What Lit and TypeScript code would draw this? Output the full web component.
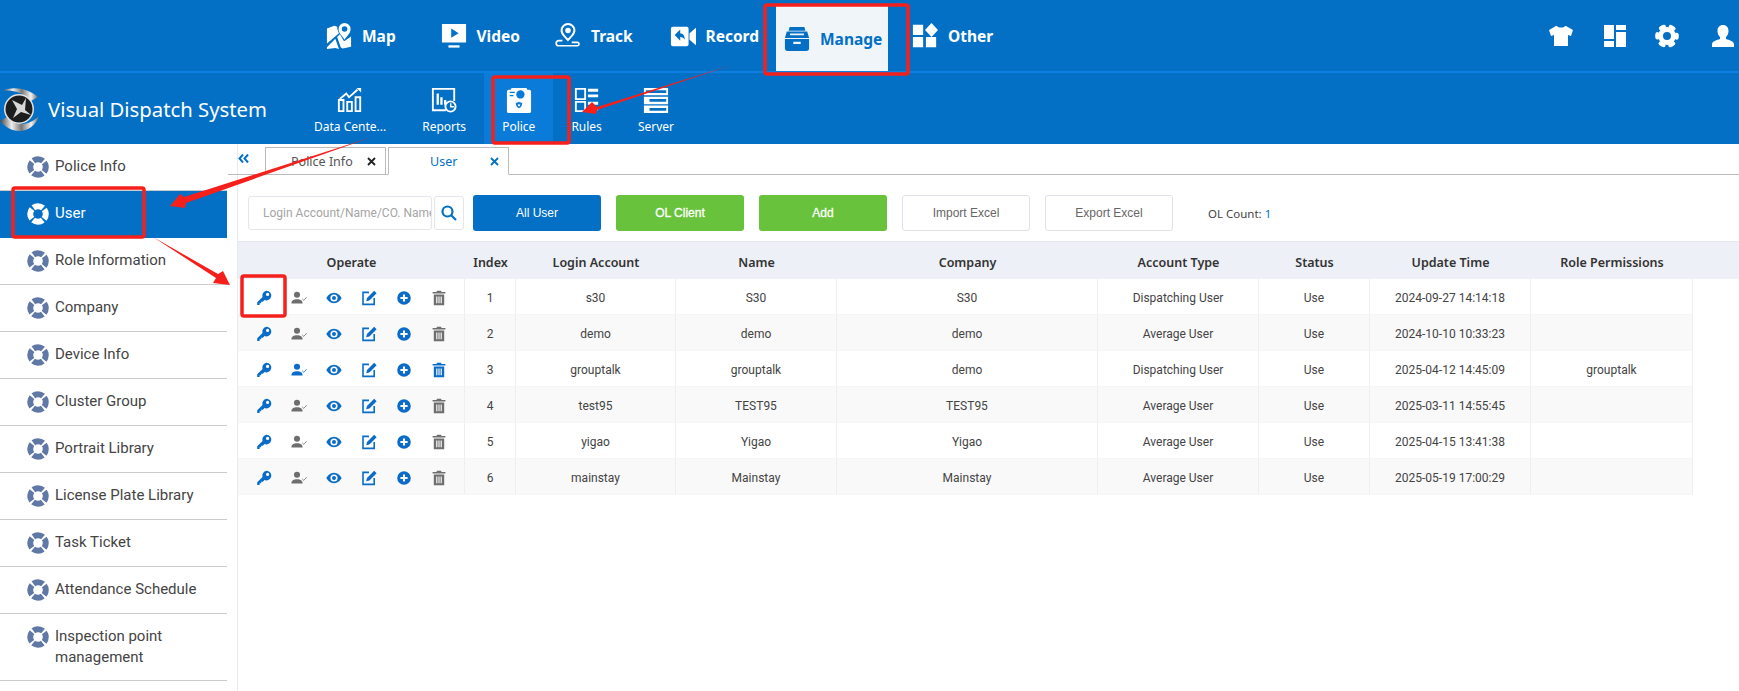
import { LitElement, html, css, svg } from "lit";
import { customElement } from "lit/decorators.js";

const topNav = [
  { label: "Map", icon: "map" },
  { label: "Video", icon: "video" },
  { label: "Track", icon: "track" },
  { label: "Record", icon: "record" },
  { label: "Manage", icon: "manage", active: true },
  { label: "Other", icon: "other" },
];

const subNav = [
  { label: "Data Cente...", icon: "data" },
  { label: "Reports", icon: "reports" },
  { label: "Police", icon: "police", active: true },
  { label: "Rules", icon: "rules" },
  { label: "Server", icon: "server" },
];

const sideItems = [
  "Police Info",
  "User",
  "Role Information",
  "Company",
  "Device Info",
  "Cluster Group",
  "Portrait Library",
  "License Plate Library",
  "Task Ticket",
  "Attendance Schedule",
  "Inspection point management",
  "Inspection line",
];

const columns = ["Index", "Login Account", "Name", "Company", "Account Type", "Status", "Update Time", "Role Permissions"];

const rows = [
  ["1", "s30", "S30", "S30", "Dispatching User", "Use", "2024-09-27 14:14:18", ""],
  ["2", "demo", "demo", "demo", "Average User", "Use", "2024-10-10 10:33:23", ""],
  ["3", "grouptalk", "grouptalk", "demo", "Dispatching User", "Use", "2025-04-12 14:45:09", "grouptalk"],
  ["4", "test95", "TEST95", "TEST95", "Average User", "Use", "2025-03-11 14:55:45", ""],
  ["5", "yigao", "Yigao", "Yigao", "Average User", "Use", "2025-04-15 13:41:38", ""],
  ["6", "mainstay", "Mainstay", "Mainstay", "Average User", "Use", "2025-05-19 17:00:29", ""],
];

// nav icons, all filled with currentColor on a 28 box
const navIcons: Record<string, any> = {
  map: svg`<path d="M1 6l8-3 3 1c0 3 1 5 2 7L1 22zM1 26l9-9 4 11-4-1-9 1zM12 15l3-3 4 7 1 .5 7-5v11l-9 2-2-1z"/><path fill-rule="evenodd" d="M20 0a6.500 6.500 0 0 1 6.500 6.500C26.500 11 22.500 14 20 18c-2.500-4-6.500-7-6.500-11.500A6.500 6.500 0 0 1 20 0zm0 3.500a3 3 0 1 0 0 6 3 3 0 0 0 0-6z"/>`,
  video: svg`<path fill-rule="evenodd" d="M1 1h26v20H1zM11 6v10l8-5z"/><path d="M8 24h12v2.500H8z"/>`,
  track: svg`<path fill-rule="evenodd" d="M14 0a8 8 0 0 1 8 8c0 4.500-5 8-8 12-3-4-8-7.500-8-12a8 8 0 0 1 8-8zm0 2.200A5.800 5.800 0 0 0 8.200 8c0 3 3.500 6 5.800 8.700 2.300-2.700 5.800-5.700 5.800-8.700A5.800 5.800 0 0 0 14 2.200zm0 2.800a3 3 0 1 1 0 6 3 3 0 0 1 0-6z"/><path fill="none" stroke="currentColor" stroke-width="1.800" d="M8 19H4a2.500 2.500 0 0 0 0 5.500h20a1.800 1.800 0 0 0 0-3.600H18"/>`,
  record: svg`<path fill-rule="evenodd" d="M1 6a2 2 0 0 1 2-2h15a2 2 0 0 1 2 2v17a2 2 0 0 1-2 2H3a2 2 0 0 1-2-2zm4 7l6 6v-4c2 0 4 1 5 3 0-4-2-7-5-7V7z"/><path d="M21 11l7-6v19l-7-6z"/>`,
  manage: svg`<path fill-rule="evenodd" d="M6 1h16l1 4H5zM3 6h22l2 7H1zM6.500 8v2h15V8zM1 14h26v10a3 3 0 0 1-3 3H4a3 3 0 0 1-3-3zm9 3v2.500h8V17z"/>`,
  other: svg`<path d="M1 2h11v11H1zM21 0l7 7.500-7 7.500-7-7.500zM1 15h11v11H1zM15 15h11v11H15z"/>`,
  shirt: svg`<path d="M8 2c1 2 7 2 8 0h1l7 4-2 6-3-1v11H5V11l-3 1-2-6 7-4z"/>`,
  layout: svg`<path d="M1 1h10v14H1zM1 17h10v6H1zM13 1h10v5H13zM13 8h10v15H13z"/>`,
  gear: svg`<circle cx="12" cy="12" r="6.500" fill="none" stroke="#fff" stroke-width="5"/><circle cx="12" cy="12" r="9.800" fill="none" stroke="#fff" stroke-width="4" stroke-linecap="round" stroke-dasharray="3.500 6.760" stroke-dashoffset="1.750"/>`,
  person: svg`<path d="M12 1c3.500 0 5.500 2.500 5.500 6 0 2.500-1 4.500-2.500 6v2c3 1.200 8 2 8 5.500V23H1v-2.500C1 17 6 16.200 9 15v-2c-1.500-1.500-2.500-3.500-2.500-6 0-3.500 2-6 5.500-6z"/>`,
};

const subIcons: Record<string, any> = {
  data: svg`<path fill="none" stroke="currentColor" stroke-width="2" d="M3 13l7-6 3 4 9-8M2 14h5v12H2zM11 16h5v10h-5zM20 11h5v15h-5z"/><path d="M21 1h5v5z"/>`,
  reports: svg`<path fill="none" stroke="currentColor" stroke-width="2" d="M16 25H2V2h23v13"/><path d="M6 7h2.500v12H6zM10 11h2.500v8H10zM14 14h2.500v5H14z"/><circle cx="21" cy="21" r="5.500" fill="none" stroke="currentColor" stroke-width="2"/><path d="M20.500 17.500h1.500v3h3v1.500h-4.500z"/>`,
  police: svg`<path fill-rule="evenodd" d="M6 1h16l1 2h2a2 2 0 0 1 2 2v21a2 2 0 0 1-2 2H3a2 2 0 0 1-2-2V5a2 2 0 0 1 2-2h2zM15.500 3.500a4.500 4.500 0 1 0 0 9 4.500 4.500 0 0 0 0-9zM4 5v1.500h5.500V5zM4 8.500V10h4V8.500zM14 16c-1 .800-2.500 1-3.500 1 0 3.500 1.500 5 3.500 6 2-1 3.500-2.500 3.500-6-1 0-2.500-.200-3.500-1z"/><path d="M14 18.500l-1.500.5c.2 1 .7 1.500 1.500 2 .8-.5 1.300-1 1.500-2z"/>`,
  rules: svg`<path fill="none" stroke="currentColor" stroke-width="2" d="M2 2h10v11H2zM2 16h10v10H2z"/><path d="M15 2h11v3H15zM15 8h11v3H15zM15 16h11v3H15zM15 22h11v3H15z"/>`,
  server: svg`<path fill-rule="evenodd" d="M1 1h26v8H1zM1 10.500h26v8H1zM1 20h26v8H1zM3 3.500v3h22v-3zM7 13v3h18v-3zM7 22.500v3h18v-3z"/>`,
};

function lifebuoy() {
  return html`<svg class="buoy" viewBox="0 0 24 24">
    <circle cx="12" cy="12" r="8.500" fill="none" stroke="currentColor" stroke-width="6.500" stroke-dasharray="11.350 2" stroke-dashoffset="5.670" />
  </svg>`;
}

// row action icons, in order: key, assign, view, edit, add, delete
function rowIcons(blueAll: boolean) {
  const personColor = blueAll ? "blue" : "gray";
  return html`
    <svg class="act blue" viewBox="0 0 20 20"><path fill-rule="evenodd" d="M13 1a6 6 0 1 1-2.300 11.500L8.500 14.700H6.500v2H4.500v2H1.500v-3.300l6.700-6.700A6 6 0 0 1 13 1zm1.500 2.500a2 2 0 1 0 0 4 2 2 0 0 0 0-4z" /></svg>
    <svg class="act ${personColor}" viewBox="0 0 20 20"><circle cx="7.500" cy="6" r="3.800" /><path d="M0.500 17c0-4 3-5.500 7-5.500s7 1.500 7 5.500z" /><path d="M14 11l2 2 3.500-4" fill="none" stroke="currentColor" stroke-width="1" /></svg>
    <svg class="act blue" viewBox="0 0 20 20"><path fill-rule="evenodd" d="M10 3.500c4.500 0 8 3.500 9.500 6.500-1.500 3-5 6.500-9.500 6.500S2 13 .5 10C2 7 5.500 3.500 10 3.500zm0 2a4.500 4.500 0 1 0 0 9 4.500 4.500 0 0 0 0-9zm0 2a2.500 2.500 0 1 1 0 5 2.500 2.500 0 0 1 0-5z" /></svg>
    <svg class="act blue" viewBox="0 0 20 20"><path d="M10 3H2.500v15h14v-8" fill="none" stroke="currentColor" stroke-width="2" /><path d="M16.500 1l3 3-9 9-4 1 1-4z" /></svg>
    <svg class="act blue" viewBox="0 0 20 20"><path fill-rule="evenodd" d="M10 1.500a8.500 8.500 0 1 1 0 17 8.500 8.500 0 0 1 0-17zM8.700 5.500v3.200H5.500v2.600h3.200v3.200h2.600v-3.200h3.200V8.700h-3.200V5.500z" /></svg>
    <svg class="act ${personColor}" viewBox="0 0 20 20"><path fill-rule="evenodd" d="M7.500 1h5l.7 1.500H18v2H2v-2h4.800zM3.500 5.500h13V19h-13zM6.500 8v8.500H8V8zM9.300 8v8.500h1.400V8zM12 8v8.500h1.500V8z" /></svg>
  `;
}

@customElement("app-root")
export class AppRoot extends LitElement {
  static styles = css`
    :host {
      display: block;
      position: relative;
      height: 100vh;
      overflow: hidden;
      background: #fff;
      font-family: "Noto Sans", "Open Sans", sans-serif;
      color: #333;
    }

    .top {
      display: flex;
      align-items: stretch;
      height: 71px;
      padding: 0 4px 0 326px;
      background: #0370c6;
      border-bottom: 2px solid #0d7fe0;
      color: #fff;
    }
    .top-item {
      display: flex;
      align-items: center;
      gap: 10px;
      width: 114.5px;
      flex: none;
      box-sizing: border-box;
      font-size: 15.500px;
      font-weight: 700;
    }
    .top-item svg {
      width: 26px;
      height: 26px;
      fill: currentColor;
      flex: none;
    }
    .top-item.active {
      width: 112px;
      margin: 6px 24px 0 -8px;
      padding-left: 8px;
      background: #f0f5fa;
      color: #0370c6;
    }
    .top-right {
      display: flex;
      align-items: center;
      gap: 30px;
      margin-left: auto;
    }
    .top-right svg {
      width: 24px;
      height: 24px;
      fill: #fff;
    }
    .top-right svg:nth-child(3) {
      margin: 0 2px 0 -2px;
    }

    .sub {
      display: flex;
      height: 71px;
      background: #0370c6;
      color: #fff;
    }
    .brand {
      display: flex;
      align-items: center;
      width: 296px;
      flex: none;
      font-size: 20.300px;
      white-space: nowrap;
    }
    .brand svg {
      width: 44px;
      height: 48px;
      margin-right: 4px;
      flex: none;
    }
    .sub-item {
      display: flex;
      flex-direction: column;
      align-items: center;
      padding: 14px 18px 0;
      font-size: 12px;
      white-space: nowrap;
    }
    .sub-item svg {
      width: 26px;
      height: 26px;
      fill: currentColor;
      margin-bottom: 5px;
    }
    .sub-item.active {
      background: #0a7bd8;
    }

    .main {
      display: flex;
      height: 547px;
    }
    .side {
      width: 238px;
      flex: none;
      box-sizing: border-box;
      padding-right: 10px;
      border-right: 1px solid #e8eaf0;
      overflow: hidden;
    }
    .side-item {
      display: flex;
      align-items: flex-start;
      gap: 6px;
      padding: 12px 10px 12px 27px;
      font-family: Roboto, sans-serif;
      font-size: 15px;
      line-height: 21px;
      border-bottom: 1px solid #ccc;
      color: #444;
    }
    .side-item.active {
      background: #0370c6;
      color: #fff;
      border-bottom-color: #0370c6;
    }
    .buoy {
      width: 22px;
      height: 22px;
      flex: none;
      color: #6078a6;
    }
    .active .buoy {
      color: #fff;
    }

    .content {
      flex: 1;
      min-width: 0;
    }
    .tabs {
      display: flex;
      align-items: flex-end;
      height: 31px;
      box-sizing: border-box;
      border-bottom: 1px solid #bbb;
      margin-left: -10px;
      padding-left: 10px;
    }
    .collapse {
      width: 27px;
      align-self: flex-start;
      margin-top: 10px;
      color: #0370c6;
      line-height: 0;
    }
    .collapse svg {
      width: 11px;
      height: 9px;
    }
    .tab {
      display: flex;
      align-items: center;
      width: 121px;
      height: 28px;
      box-sizing: border-box;
      margin-right: 2px;
      margin-bottom: -1px;
      padding: 0 9px 0 25px;
      border: 1px solid #bbb;
      font-size: 12.500px;
      color: #555;
    }
    .tab span {
      flex: 1;
    }
    .tab.on {
      padding-left: 41px;
      color: #0370c6;
      border-bottom-color: #fff;
    }
    .tab svg {
      width: 9px;
      height: 9px;
    }

    .toolbar {
      display: flex;
      align-items: center;
      height: 36px;
      margin: 20px 0 10px 10px;
      font-size: 12px;
    }
    .search {
      width: 184px;
      height: 34px;
      box-sizing: border-box;
      padding: 0 0 0 14px;
      border: 1px solid #e3e6ee;
      border-radius: 3px;
      outline: none;
      font: 12px Roboto, sans-serif;
    }
    .search::placeholder {
      color: #a5a5a5;
    }
    .search-btn {
      display: flex;
      align-items: center;
      justify-content: center;
      width: 30px;
      height: 34px;
      box-sizing: border-box;
      margin: 0 9px 0 2px;
      border: 1px solid #e3e6ee;
      border-radius: 3px;
      color: #0370c6;
    }
    .search-btn svg {
      width: 16px;
      height: 16px;
    }
    .btn {
      display: flex;
      align-items: center;
      justify-content: center;
      width: 128px;
      height: 36px;
      box-sizing: border-box;
      margin-right: 15px;
      border-radius: 3px;
      font-family: "Liberation Sans", sans-serif;
      font-size: 12px;
      color: #fff;
    }
    .btn.blue {
      background: #0370c6;
    }
    .btn.green {
      background: #68c23b;
      -webkit-text-stroke: 0.3px #fff;
    }
    .btn.plain {
      color: #666;
      border: 1px solid #dfe2ea;
    }
    .count {
      margin-left: 20px;
      font-size: 11.500px;
      color: #444;
    }
    .count b {
      font-weight: 400;
      color: #0370c6;
    }

    .grid {
      display: grid;
      grid-template-columns: 227px 51px 160px 161px 261px 161px 111px 161px 162px;
      font-size: 12px;
      text-align: center;
    }
    .head {
      height: 38px;
      padding-top: 4px;
      grid-template-columns: 227px 51px 160px 161px 261px 161px 111px 161px 162px 1fr;
      align-items: center;
      background: #edf0f6;
      border-top: 1px solid #e3e6ee;
      box-sizing: border-box;
      font-size: 12.500px;
      font-weight: 600;
      color: #333;
    }
    .row {
      height: 36px;
      width: 1455px;
      font-family: Roboto, sans-serif;
      color: #444;
    }
    .row:nth-child(even) {
      background: #f9f9f9;
    }
    .cell {
      display: flex;
      align-items: center;
      justify-content: center;
      padding-top: 2px;
      box-sizing: border-box;
      border-right: 1px solid #eeeff3;
      border-bottom: 1px solid #f6f6f8;
      white-space: nowrap;
    }
    .ops {
      justify-content: flex-start;
      gap: 19px;
      padding-left: 18px;
    }
    .act {
      width: 16px;
      height: 16px;
      flex: none;
      fill: currentColor;
    }
    .act.blue {
      color: #0a6cc8;
    }
    .act.gray {
      color: #6e6e6e;
    }

    .marks {
      position: absolute;
      top: 0;
      left: 0;
      width: 1739px;
      height: 691px;
      pointer-events: none;
    }
  `;

  render() {
    return html`
      <div class="top">
        ${topNav.map(
          (n) => html`<div class="top-item ${n.active ? "active" : ""}">
            <svg viewBox="0 0 28 28">${navIcons[n.icon]}</svg>${n.label}
          </div>`
        )}
        <div class="top-right">
          <svg viewBox="0 0 24 24">${navIcons.shirt}</svg>
          <svg viewBox="0 0 24 24">${navIcons.layout}</svg>
          <svg viewBox="0 0 24 24">${navIcons.gear}</svg>
          <svg viewBox="0 0 24 24">${navIcons.person}</svg>
        </div>
      </div>

      <div class="sub">
        <div class="brand">
          <svg viewBox="0 0 44 48">
            <defs>
              <linearGradient id="steel" x1="0" y1="0" x2="1" y2="0">
                <stop offset="0" stop-color="#444" />
                <stop offset="0.3" stop-color="#eee" />
                <stop offset="0.55" stop-color="#777" />
                <stop offset="0.8" stop-color="#f2f2f2" />
                <stop offset="1" stop-color="#666" />
              </linearGradient>
            </defs>
            <path d="M2 6C12 1 28 3 38 12L31 16C24 8 12 4 2 6z" fill="url(#steel)" />
            <path d="M0 36L7 32C14 41 28 42 39 31 36 40 28 46 19 46 12 46 5 42 0 36z" fill="url(#steel)" />
            <circle cx="19" cy="24" r="15" fill="#e4e4e4" />
            <circle cx="19" cy="24" r="13.500" fill="#1d1d1d" />
            <path d="M12 15L22 20 26 13 25 25 31 30 21 27 13 33 17 24z" fill="#d8d8d8" />
          </svg>
          Visual Dispatch System
        </div>
        ${subNav.map(
          (n) => html`<div class="sub-item ${n.active ? "active" : ""}">
            <svg viewBox="0 0 28 28">${subIcons[n.icon]}</svg>${n.label}
          </div>`
        )}
      </div>

      <div class="main">
        <div class="side">
          ${sideItems.map(
            (s) => html`<div class="side-item ${s === "User" ? "active" : ""}">${lifebuoy()}<span>${s}</span></div>`
          )}
        </div>

        <div class="content">
          <div class="tabs">
            <div class="collapse">
              <svg viewBox="0 0 11 9" fill="none" stroke="currentColor" stroke-width="2">
                <path d="M5 .5L1.500 4.500 5 8.500M10 .5L6.500 4.500 10 8.500" />
              </svg>
            </div>
            <div class="tab"><span>Police Info</span>${this.closeIcon("#222")}</div>
            <div class="tab on"><span>User</span>${this.closeIcon("#0370c6")}</div>
          </div>

          <div class="toolbar">
            <input class="search" placeholder="Login Account/Name/CO. Name" />
            <div class="search-btn">
              <svg viewBox="0 0 16 16" fill="none" stroke="currentColor" stroke-width="2.200">
                <circle cx="6.500" cy="6.500" r="5" /><path d="M10 10l5 5" />
              </svg>
            </div>
            <div class="btn blue">All User</div>
            <div class="btn green">OL Client</div>
            <div class="btn green">Add</div>
            <div class="btn plain">Import Excel</div>
            <div class="btn plain">Export Excel</div>
            <div class="count">OL Count: <b>1</b></div>
          </div>

          <div class="grid head">
            <div>Operate</div>
            ${columns.map((c) => html`<div>${c}</div>`)}
          </div>
          <div>
            ${rows.map(
              (r, i) => html`<div class="grid row">
                <div class="cell ops">${rowIcons(i === 2)}</div>
                ${r.map((v) => html`<div class="cell">${v}</div>`)}
              </div>`
            )}
          </div>
        </div>
      </div>

      <!-- red annotations drawn over the screenshot -->
      <svg class="marks" viewBox="0 0 1739 691">
        <g fill="none" stroke="#f5201c" stroke-width="3.500">
          <rect x="765" y="5" width="143" height="69" rx="2" />
          <rect x="493" y="77" width="76" height="66" rx="2" />
          <rect x="13" y="188" width="131" height="49" rx="2" />
          <rect x="242" y="276" width="43" height="40" rx="2" />
        </g>
        <g fill="#f5201c">
          <path d="M732 65L597 107 592 102 582 112 596 114 597 110z" />
          <path d="M372 137L184 197 180 194 170 206 185 208 186 203z" />
          <path d="M153 237L218 274 223 271 230 285 213 283 216 278z" />
        </g>
      </svg>
    `;
  }

  closeIcon(color: string) {
    return html`<svg viewBox="0 0 9 9" fill="none" stroke=${color} stroke-width="1.800"><path d="M1 1l7 7M8 1L1 8" /></svg>`;
  }
}
